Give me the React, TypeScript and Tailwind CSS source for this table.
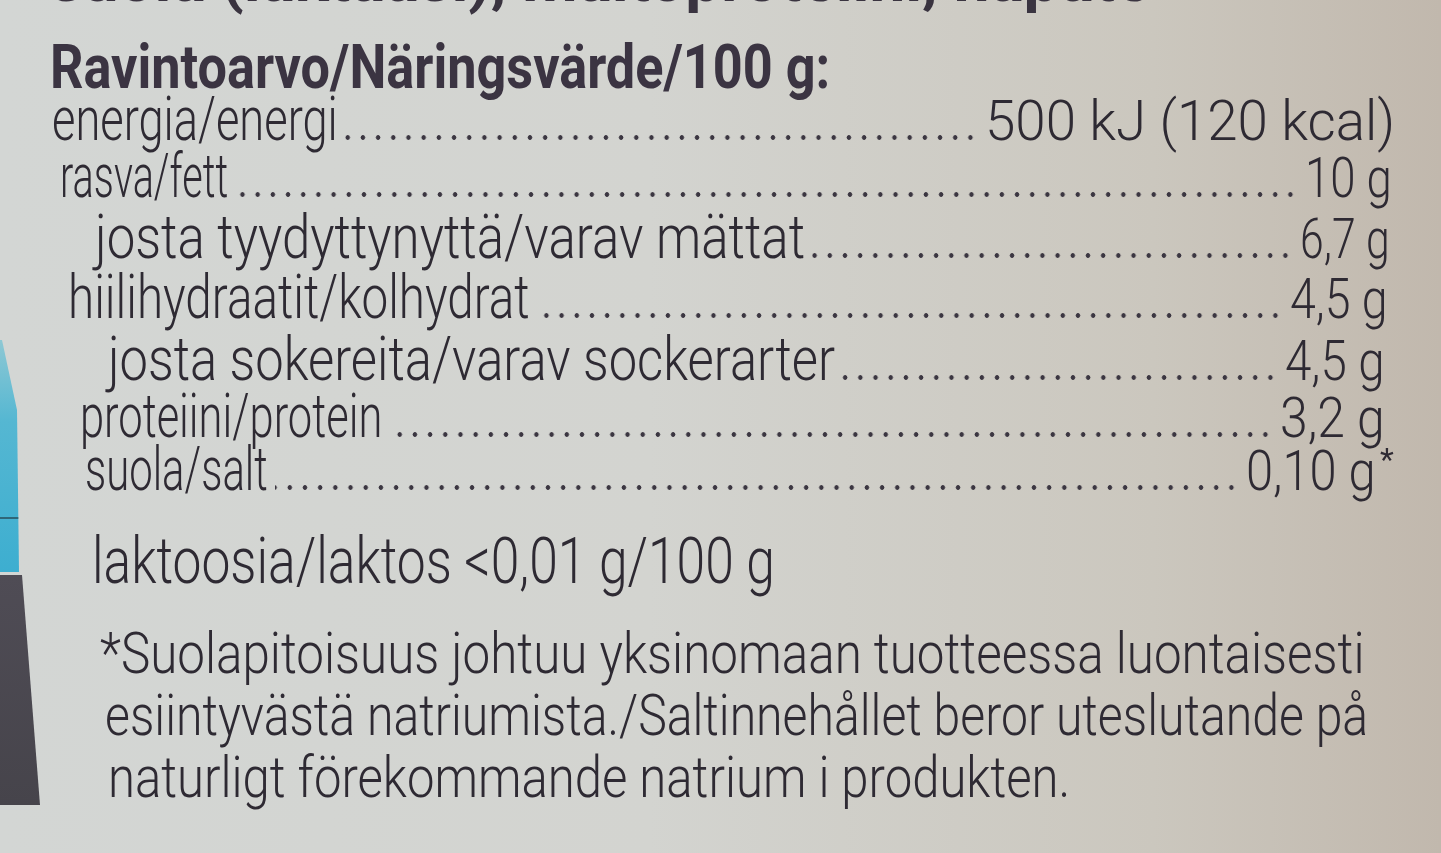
import React, { useLayoutEffect, useRef, useState } from "react";

function Fit({ w, className = "", children }: { w: string; className?: string; children: React.ReactNode }) {
  const box = useRef<HTMLDivElement>(null);
  const txt = useRef<HTMLSpanElement>(null);
  const [s, setS] = useState(1);
  useLayoutEffect(() => {
    const measure = () => {
      const b = box.current;
      const t = txt.current;
      if (b && t && t.offsetWidth) setS(b.clientWidth / t.offsetWidth);
    };
    measure();
    if ((document as any).fonts?.ready) (document as any).fonts.ready.then(measure);
  }, []);
  return (
    <div ref={box} className={`shrink-0 whitespace-nowrap ${w} ${className}`}>
      <span ref={txt} className="inline-block origin-left" style={{ transform: `scaleX(${s})` }}>
        {children}
      </span>
    </div>
  );
}

type Row = {
  label: string;
  lw: string;
  ml: string;
  value: string;
  vw: string;
  mr: string;
  h: string;
  star?: boolean;
};

const rows: Row[] = [
  { label: "energia/energi", lw: "w-[286px]", ml: "ml-[10px]", value: "500 kJ (120 kcal)", vw: "w-[410px]", mr: "mr-[46px]", h: "h-[57px]" },
  { label: "rasva/fett", lw: "w-[168px]", ml: "ml-[18px]", value: "10 g", vw: "w-[87px]", mr: "mr-[49px]", h: "h-[61px]" },
  { label: "josta tyydyttynyttä/varav mättat", lw: "w-[710px]", ml: "ml-[53px]", value: "6,7 g", vw: "w-[90px]", mr: "mr-[51px]", h: "h-[60px]" },
  { label: "hiilihydraatit/kolhydrat", lw: "w-[462px]", ml: "ml-[26px]", value: "4,5 g", vw: "w-[98px]", mr: "mr-[53px]", h: "h-[62px]" },
  { label: "josta sokereita/varav sockerarter", lw: "w-[727px]", ml: "ml-[66px]", value: "4,5 g", vw: "w-[100px]", mr: "mr-[56px]", h: "h-[57px]" },
  { label: "proteiini/protein", lw: "w-[302px]", ml: "ml-[38px]", value: "3,2 g", vw: "w-[105px]", mr: "mr-[56px]", h: "h-[53px]" },
  { label: "suola/salt", lw: "w-[183px]", ml: "ml-[43px]", value: "0,10 g", vw: "w-[130px]", mr: "mr-[41px]", h: "h-[58px]", star: true },
];

export default function App() {
  return (
    <div className="w-[1441px] h-[853px] overflow-hidden flex bg-[linear-gradient(90deg,#d3d6d4_0%,#d3d4d0_45%,#cbc7be_80%,#c1b8ad_100%)] text-[#2e2a33] [font-family:Roboto,'Noto_Sans',sans-serif]">
      {/* left edge of the package */}
      <div className="w-[42px] shrink-0 flex flex-col">
        <div className="h-[340px]" />
        <div className="h-[232px] w-[19px] bg-[linear-gradient(180deg,#8ec8d4_0%,#55b7d2_35%,#3daed0_100%)] [clip-path:polygon(0_0,2px_0,17px_70px,19px_100%,0_100%)] flex flex-col">
          <div className="mt-[177px] h-[2px] w-[19px] bg-[#2f6678]" />
        </div>
        <div className="h-[3px]" />
        <div className="h-[230px] w-[40px] bg-[linear-gradient(180deg,#4f4c55,#46444b)] [clip-path:polygon(0_0,22px_0,40px_100%,0_100%)]" />
      </div>

      {/* label text */}
      <div className="flex-1 flex flex-col blur-[0.6px]">
        <Fit w="w-[1100px]" className="ml-[8px] -mt-[49px] h-[58px] text-[62px] leading-[58px] font-bold text-[#3a3440]">
          suola (laktaasi), maitoproteiini, hapate
        </Fit>

        <Fit w="w-[780px]" className="ml-[8px] mt-[32px] h-[52px] text-[62px] leading-[52px] font-bold text-[#3b3442]">
          Ravintoarvo/Näringsvärde/100 g:
        </Fit>

        <div className="mt-[4px] flex flex-col">
          {rows.map((r) => (
            <div key={r.label} className={`flex items-baseline ${r.h} ${r.ml} ${r.mr}`}>
              <Fit w={r.lw} className="text-[62px] leading-[44px] font-light">
                {r.label}
              </Fit>
              <div className="flex-1 mx-[7px] h-[5px] bg-[radial-gradient(circle,#3b3641_2px,transparent_2.6px)] bg-[length:15.2px_5px] bg-repeat-x bg-right" />
              <Fit w={r.vw} className="text-[56px] leading-[44px] font-light">
                {r.value}
              </Fit>
              {r.star && (
                <div className="self-start ml-[4px] mt-[-4px] w-[20px] text-[32px] leading-none">*</div>
              )}
            </div>
          ))}
        </div>

        <Fit w="w-[683px]" className="ml-[50px] mt-[28px] h-[58px] text-[64px] leading-[58px] font-light">
          laktoosia/laktos &lt;0,01 g/100 g
        </Fit>

        <div className="mt-[31px] flex flex-col">
          <Fit w="w-[1265px]" className="ml-[58px] h-[62px] text-[58px] leading-[62px] font-light">
            *Suolapitoisuus johtuu yksinomaan tuotteessa luontaisesti
          </Fit>
          <Fit w="w-[1263px]" className="ml-[63px] h-[62px] text-[58px] leading-[62px] font-light">
            esiintyvästä natriumista./Saltinnehållet beror uteslutande på
          </Fit>
          <Fit w="w-[962px]" className="ml-[66px] h-[62px] text-[58px] leading-[62px] font-light">
            naturligt förekommande natrium i produkten.
          </Fit>
        </div>
      </div>
    </div>
  );
}
